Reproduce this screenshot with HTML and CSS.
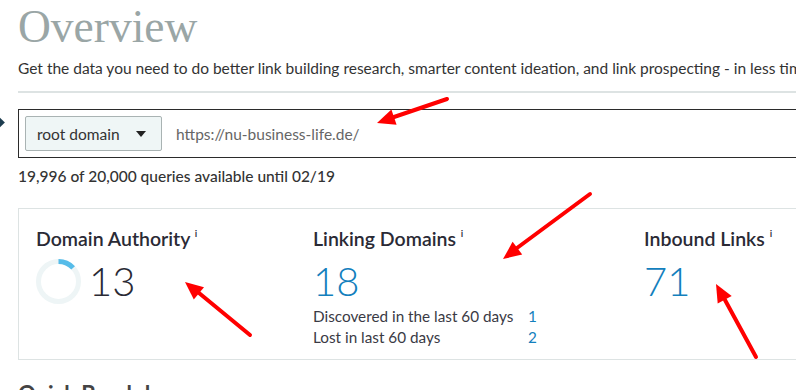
FILE: index.html
```html
<!DOCTYPE html>
<html lang="en">

<head>
    <meta charset="UTF-8">
    <meta name="viewport" content="width=device-width, initial-scale=1.0">
    <title>Overview</title>
    <link rel="stylesheet" href="styles.css">
</head>

<body>
    <span class="marker"></span>

    <div class="page">
        <h1 class="title">Overview</h1>
        <p class="intro">Get the data you need to do better link building research, smarter content ideation, and link prospecting - in less time.</p>

        <div class="search">
            <button class="scope">root domain <span class="caret"></span></button>
            <span class="url">https://nu-business-life.de/</span>
        </div>
        <p class="quota">19,996 of 20,000 queries available until 02/19</p>

        <div class="metrics">
            <div class="metric">
                <h3>Domain Authority <sup>i</sup></h3>
                <div class="metric-value">
                    <svg class="donut" width="45" height="45" viewBox="0 0 45 45">
                        <circle cx="22.5" cy="22.5" r="20" fill="none" stroke="#eef5f6" stroke-width="5"/>
                        <!-- 13 of 100 -->
                        <circle cx="22.5" cy="22.5" r="20" fill="none" stroke="#56bce9" stroke-width="5"
                            stroke-dasharray="16.3 200" transform="rotate(-90 22.5 22.5)"/>
                    </svg>
                    <span class="number">13</span>
                </div>
            </div>

            <div class="metric">
                <h3>Linking Domains <sup>i</sup></h3>
                <div class="metric-value"><span class="number blue">18</span></div>
                <div class="details">
                    <span>Discovered in the last 60 days</span><span class="blue">1</span>
                    <span>Lost in last 60 days</span><span class="blue">2</span>
                </div>
            </div>

            <div class="metric">
                <h3>Inbound Links <sup>i</sup></h3>
                <div class="metric-value"><span class="number blue">71</span></div>
            </div>
        </div>

        <h2 class="section">Quick Breakdown</h2>
    </div>

    <!-- annotation arrows -->
    <svg class="arrows" width="796" height="390" viewBox="0 0 796 390">
        <g stroke="#ff0000" stroke-width="4" stroke-linecap="round" fill="#ff0000">
            <line x1="447" y1="99" x2="394" y2="117"/>
            <polygon stroke="none" points="377,123 396.6,124.8 391.4,109.6"/>
            <line x1="250" y1="335" x2="199" y2="293"/>
            <polygon stroke="none" points="185,282 204,287.2 193.8,299.6"/>
            <line x1="590" y1="194" x2="517" y2="248"/>
            <polygon stroke="none" points="503,259 522.2,254.6 512.6,241.8"/>
            <line x1="756" y1="357" x2="725" y2="300"/>
            <polygon stroke="none" points="716,284 731.7,296 717.7,303.6"/>
        </g>
    </svg>
</body>

</html>
```

FILE: styles.css
```css
body {
    font-family: Lato, 'Noto Sans', sans-serif;
    margin: 0;
    color: #333;
    background: #fff;
    overflow: hidden;
    position: relative;
    height: 390px;
}

.page {
    width: 1000px;
    padding-left: 18px;
}

.marker {
    position: absolute;
    left: -6px;
    top: 118px;
    width: 9px;
    height: 9px;
    background: #1d3d4f;
    transform: rotate(45deg);
}

.title {
    font-family: 'Liberation Serif', serif;
    font-weight: normal;
    font-size: 45.5px;
    line-height: 52px;
    color: #9aa6a6;
    margin: 0;
    padding-top: 1px;
}

.intro {
    font-size: 15.5px;
    line-height: 20px;
    margin: 5px 0 0;
    padding-bottom: 13px;
    white-space: nowrap;
    border-bottom: 2px solid #dde3e3;
}

.search {
    margin-top: 16px;
    border: 1px solid #2b2b2b;
    padding: 6px;
    display: flex;
    align-items: center;
}

.scope {
    font-family: Lato, sans-serif;
    font-size: 15.5px;
    color: #333;
    width: 137px;
    height: 35px;
    padding: 0 0 0 11px;
    display: flex;
    align-items: center;
    background: #eff6f6;
    border: 1px solid #a9b3b3;
    border-radius: 2px;
}

.caret {
    width: 0;
    height: 0;
    margin-left: 16px;
    border-left: 5px solid transparent;
    border-right: 5px solid transparent;
    border-top: 6px solid #222;
}

.url {
    margin-left: 14px;
    font-size: 15.5px;
    color: #666;
}

.quota {
    font-size: 15.5px;
    line-height: 18px;
    margin: 9px 0 0;
    font-weight: 500;
    color: #333;
}

.metrics {
    margin-top: 23px;
    border: 1px solid #dde3e3;
    padding: 13px 0 11px 17px;
    display: grid;
    grid-template-columns: 277px 331px 1fr;
    align-items: start;
}

.metric h3 {
    margin: 0;
    font-size: 19.5px;
    line-height: 22px;
    font-weight: 600;
    color: #2a2a35;
}

.metric h3 sup {
    font-size: 10px;
    font-weight: 600;
    vertical-align: 9px;
}

.metric-value {
    display: flex;
    align-items: center;
    gap: 8px;
    margin-top: 8px;
    height: 46px;
}

.number {
    font-size: 40px;
    line-height: 46px;
    font-weight: 300;
    color: #2a2a35;
}

.blue {
    color: #1380bd;
}

.details {
    margin-top: 2px;
    display: grid;
    grid-template-columns: 215px auto;
    font-size: 15.3px;
    line-height: 21px;
    color: #3a3a45;
}

.section {
    margin: 20px 0 0;
    font-size: 22px;
    font-weight: bold;
    color: #444;
}

.arrows {
    position: absolute;
    left: 0;
    top: 0;
    pointer-events: none;
}
```
